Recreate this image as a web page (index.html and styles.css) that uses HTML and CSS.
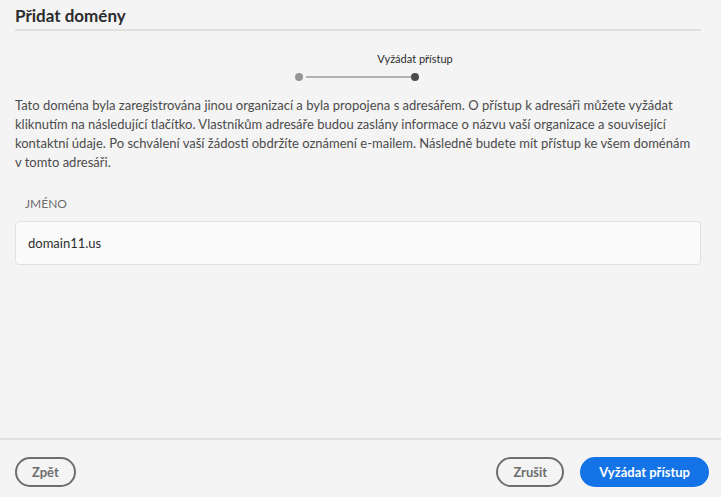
FILE: index.html
```html
<!DOCTYPE html>
<html lang="cs">
<head>
<meta charset="utf-8">
<link rel="stylesheet" href="styles.css">
</head>
<body>
<div class="dialog">
  <div class="content">
    <h1 class="title">Přidat domény</h1>
    <div class="stepper">
      <span class="dot done"></span>
      <span class="line"></span>
      <div class="step">
        <div class="step-label">Vyžádat přístup</div>
        <span class="dot current"></span>
      </div>
    </div>
    <p class="desc">Tato doména byla zaregistrována jinou organizací a byla propojena s adresářem. O přístup k adresáři můžete vyžádat kliknutím na následující tlačítko. Vlastníkům adresáře budou zaslány informace o názvu vaší organizace a související kontaktní údaje. Po schválení vaší žádosti obdržíte oznámení e-mailem. Následně budete mít přístup ke všem doménám v tomto adresáři.</p>
    <div class="col-head">JMÉNO</div>
    <div class="row">domain11.us</div>
  </div>
  <div class="footer">
    <button class="btn outline">Zpět</button>
    <div class="right">
      <button class="btn outline">Zrušit</button>
      <button class="btn primary">Vyžádat přístup</button>
    </div>
  </div>
</div>
</body>
</html>
```

FILE: styles.css
```css
html, body {
  margin: 0;
  padding: 0;
  background: #f4f4f4;
}
body {
  font-family: Lato, "Open Sans", sans-serif;
  color: #4b4b4b;
}
.dialog {
  width: 721px;
  height: 497px;
  display: flex;
  flex-direction: column;
}
.content {
  flex: 1;
  padding: 0 20px 0 15px;
}
.title {
  margin: 0;
  padding-top: 3px;
  height: 26px;
  font-size: 17px;
  font-weight: 700;
  color: #2c2c2c;
  line-height: 26px;
  border-bottom: 2px solid #e1e1e1;
}
.stepper {
  display: flex;
  align-items: flex-end;
  margin-top: 20px;
  padding-left: 280px;
}
.step {
  display: flex;
  flex-direction: column;
  align-items: center;
  width: 80px;
  margin-left: -36px;
}
.step-label {
  font-size: 11px;
  line-height: 16px;
  color: #2c2c2c;
  margin-bottom: 6px;
}
.dot {
  width: 8px;
  height: 8px;
  border-radius: 50%;
  display: block;
  flex: none;
}
.dot.done { background: #959595; }
.dot.current { background: #4b4b4b; }
.line {
  display: block;
  flex: none;
  width: 105px;
  height: 2px;
  background: #b3b3b3;
  margin: 0 0 3px 3px;
}
.desc {
  margin: 15px 0 0 0;
  max-width: 679px;
  font-size: 13px;
  line-height: 19px;
  color: #4b4b4b;
}
.col-head {
  margin-top: 24px;
  padding-left: 10px;
  font-size: 12px;
  line-height: 16px;
  color: #6e6e6e;
}
.row {
  margin-top: 9px;
  height: 42px;
  line-height: 42px;
  padding-left: 12px;
  background: #fafafa;
  border: 1px solid #e1e1e1;
  border-radius: 4px;
  font-size: 13px;
  color: #2c2c2c;
  width: 672px;
}
.footer {
  border-top: 2px solid #e1e1e1;
  height: 59px;
  flex: none;
  display: flex;
  align-items: center;
  justify-content: space-between;
  padding: 6px 12px 0 15px;
  box-sizing: border-box;
}
.right {
  display: flex;
  gap: 16px;
}
.btn {
  font-family: inherit;
  font-size: 13px;
  font-weight: 700;
  height: 30px;
  border-radius: 15px;
  padding: 0 15px;
  cursor: pointer;
}
.btn.outline {
  background: transparent;
  border: 2px solid #6e6e6e;
  color: #6e6e6e;
}
.btn.primary {
  background: #1473e6;
  border: 2px solid #1473e6;
  color: #fff;
  padding: 0 17px;
}
```
